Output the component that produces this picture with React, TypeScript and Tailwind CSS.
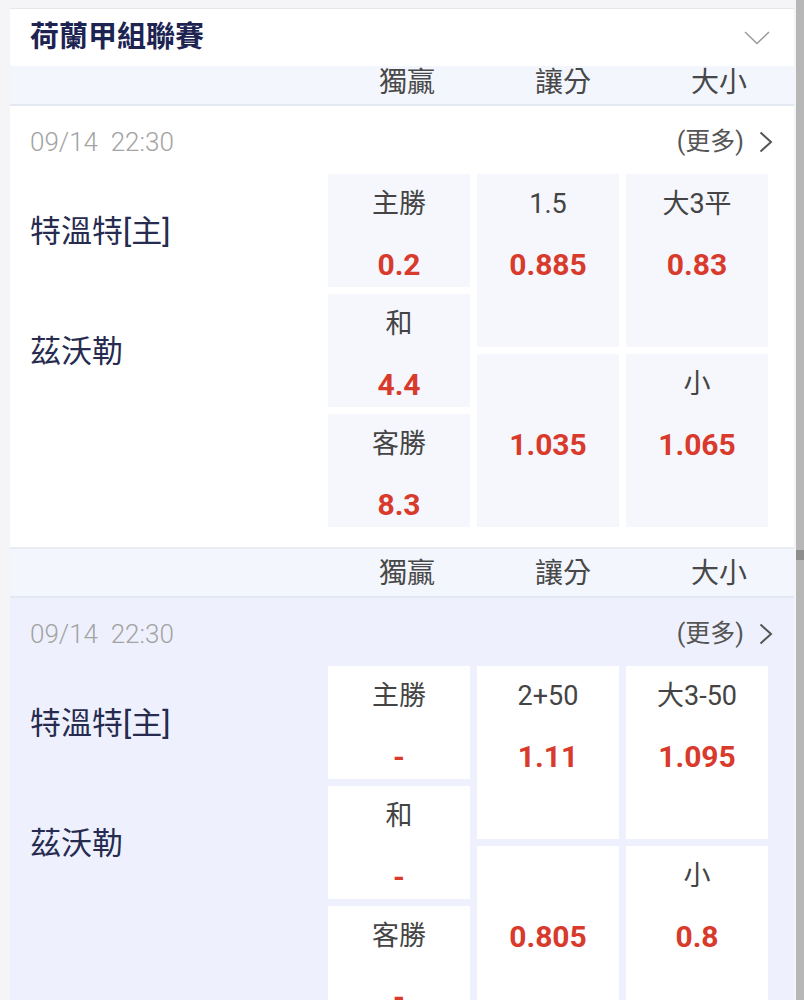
import React from 'react';

type Cell = { label: string; value: string };

interface MatchProps {
  time: string;
  home: string;
  away: string;
  win: Cell[];
  handicap: Cell[];
  total: Cell[];
  tone: 'white' | 'blue';
}

const FONT = { fontFamily: 'Roboto, "Noto Sans CJK TC", sans-serif' };

const ColumnHeader: React.FC<{ tall?: boolean }> = ({ tall }) => (
  <div
    className={`flex items-center justify-end gap-[100px] pr-[47px] bg-[#f3f6fd] border-b-2 border-[#e4e8f1] text-[28px] text-[#484848] ${
      tall ? 'h-[51px] border-t-2 border-t-[#e9ecf2] pt-[2px]' : 'h-[40px] pb-[4px]'
    }`}
  >
    <span>獨贏</span>
    <span>讓分</span>
    <span>大小</span>
  </div>
);

const OddsCell: React.FC<{ cell: Cell; tall?: boolean; bg: string }> = ({ cell, tall, bg }) => (
  <div className={`${tall ? 'h-[173px]' : 'h-[113px]'} ${bg} flex flex-col items-center pt-[12px]`}>
    <div className="h-[36px] leading-[36px] text-[27px] text-[#444]">{cell.label}</div>
    <div className="mt-[25px] leading-[36px] text-[30px] font-bold text-[#d83a2c]">{cell.value}</div>
  </div>
);

const Match: React.FC<MatchProps> = ({ time, home, away, win, handicap, total, tone }) => {
  const cellBg = tone === 'white' ? 'bg-[#f5f7fc]' : 'bg-white';
  return (
    <div className={`${tone === 'white' ? 'bg-white' : 'bg-[#eef1fd]'} pl-[20px] pr-[26px] pb-[20px]`}>
      <div className="h-[68px] flex items-center justify-between pt-[4px]">
        <span className="text-[26px] font-light text-[#a3a3a3] whitespace-pre">{time}</span>
        <span className="flex items-center gap-[15px] -mr-[5px] text-[25px] text-[#555]">
          (更多)
          <svg width="14" height="22" viewBox="0 0 14 22" fill="none">
            <path d="M1.5 1.5L12 11L1.5 20.5" stroke="#555" strokeWidth="2" />
          </svg>
        </span>
      </div>
      <div className="flex">
        <div className="flex-1 flex flex-col gap-[7px] pt-[2px] text-[31px] text-[#262b4f]">
          <div className="h-[113px] flex items-center">{home}</div>
          <div className="h-[113px] flex items-center">{away}</div>
        </div>
        <div className="w-[440px] grid grid-cols-3 gap-[7px]">
          <div className="flex flex-col gap-[7px]">
            {win.map((c, i) => (
              <OddsCell key={i} cell={c} bg={cellBg} />
            ))}
          </div>
          <div className="flex flex-col gap-[7px]">
            {handicap.map((c, i) => (
              <OddsCell key={i} cell={c} tall bg={cellBg} />
            ))}
          </div>
          <div className="flex flex-col gap-[7px]">
            {total.map((c, i) => (
              <OddsCell key={i} cell={c} tall bg={cellBg} />
            ))}
          </div>
        </div>
      </div>
    </div>
  );
};

export default function App() {
  return (
    <div className="w-[804px] min-h-[1000px] flex bg-[#f5f5f7]" style={FONT}>
      <div className="flex-1 pl-[10px] pr-[2px] pt-[8px]">
        <div className="border-t border-[#e6e6e8]">
          <div className="bg-white h-[57px] flex items-center justify-between pl-[20px] pr-[24px]">
            <h1 className="text-[29px] font-bold text-[#1d2452]">荷蘭甲組聯賽</h1>
            <svg width="26" height="14" viewBox="0 0 26 14" fill="none">
              <path d="M1 1L13 12.5L25 1" stroke="#9a9a9a" strokeWidth="1.5" />
            </svg>
          </div>
          <ColumnHeader />
          <Match
            tone="white"
            time="09/14  22:30"
            home="特溫特[主]"
            away="茲沃勒"
            win={[
              { label: '主勝', value: '0.2' },
              { label: '和', value: '4.4' },
              { label: '客勝', value: '8.3' },
            ]}
            handicap={[
              { label: '1.5', value: '0.885' },
              { label: '', value: '1.035' },
            ]}
            total={[
              { label: '大3平', value: '0.83' },
              { label: '小', value: '1.065' },
            ]}
          />
          <ColumnHeader tall />
          <Match
            tone="blue"
            time="09/14  22:30"
            home="特溫特[主]"
            away="茲沃勒"
            win={[
              { label: '主勝', value: '-' },
              { label: '和', value: '-' },
              { label: '客勝', value: '-' },
            ]}
            handicap={[
              { label: '2+50', value: '1.11' },
              { label: '', value: '0.805' },
            ]}
            total={[
              { label: '大3-50', value: '1.095' },
              { label: '小', value: '0.8' },
            ]}
          />
        </div>
      </div>
      <div className="w-[8px] bg-[#b7b7b7] flex flex-col">
        <div className="mt-[550px] h-[10px] bg-[#8e8e8e]" />
      </div>
    </div>
  );
}
